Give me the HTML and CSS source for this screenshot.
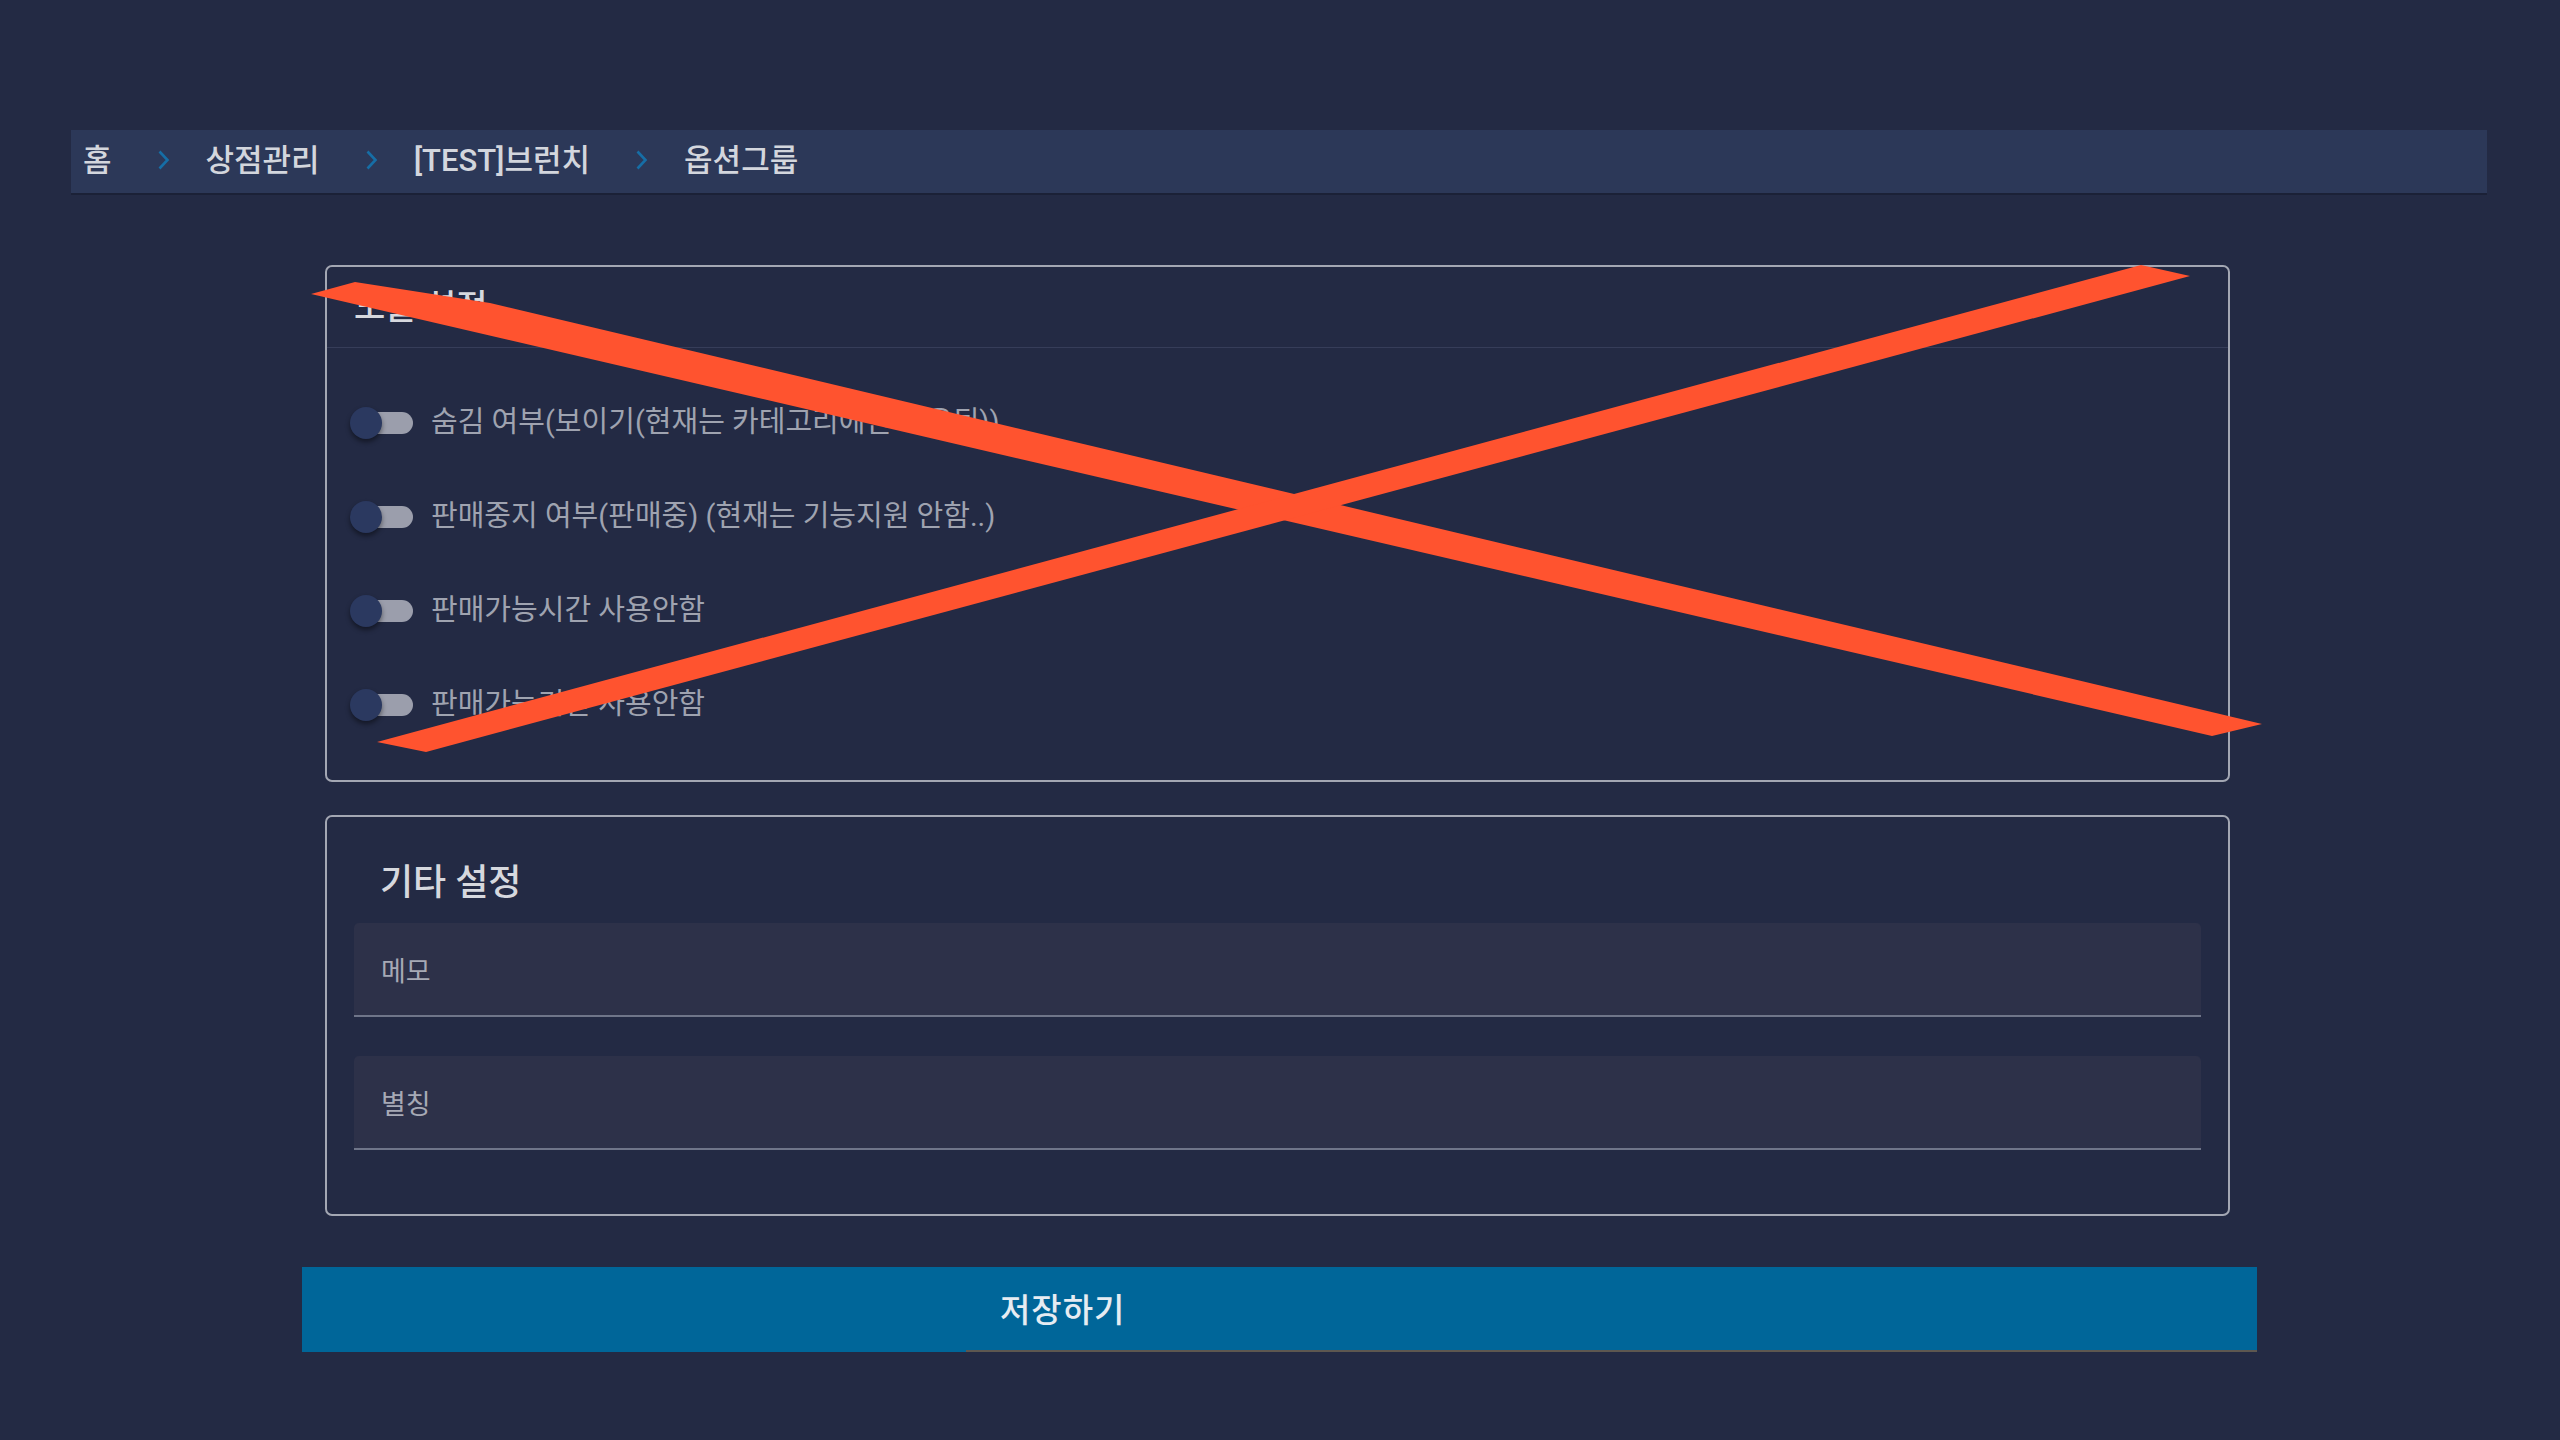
FILE: index.html
```html
<!DOCTYPE html>
<html lang="ko">
<head>
<meta charset="utf-8">
<title>옵션그룹</title>
<link rel="stylesheet" href="styles.css">
</head>
<body>
<div class="page">
  <nav class="crumbs">
    <span class="crumb">홈</span>
    <span class="sep"><svg viewBox="0 0 13 20" width="13" height="20"><path d="M2.5 1.5 L10.5 10 L2.5 18.5" fill="none" stroke="#166ea6" stroke-width="2.6"/></svg></span>
    <span class="crumb">상점관리</span>
    <span class="sep"><svg viewBox="0 0 13 20" width="13" height="20"><path d="M2.5 1.5 L10.5 10 L2.5 18.5" fill="none" stroke="#166ea6" stroke-width="2.6"/></svg></span>
    <span class="crumb">[TEST]브런치</span>
    <span class="sep"><svg viewBox="0 0 13 20" width="13" height="20"><path d="M2.5 1.5 L10.5 10 L2.5 18.5" fill="none" stroke="#166ea6" stroke-width="2.6"/></svg></span>
    <span class="crumb">옵션그룹</span>
  </nav>

  <main class="content">
    <section class="card card-toggles">
      <header class="card-head">노출 설정</header>
      <div class="toggle-list">
        <div class="toggle-row">
          <span class="switch"><span class="track"></span><span class="thumb"></span></span>
          <span class="toggle-label">숨김 여부(보이기(현재는 카테고리에만 적용됨))</span>
        </div>
        <div class="toggle-row">
          <span class="switch"><span class="track"></span><span class="thumb"></span></span>
          <span class="toggle-label">판매중지 여부(판매중) (현재는 기능지원 안함..)</span>
        </div>
        <div class="toggle-row">
          <span class="switch"><span class="track"></span><span class="thumb"></span></span>
          <span class="toggle-label">판매가능시간 사용안함</span>
        </div>
        <div class="toggle-row">
          <span class="switch"><span class="track"></span><span class="thumb"></span></span>
          <span class="toggle-label">판매가능기간 사용안함</span>
        </div>
      </div>
    </section>

    <section class="card card-etc">
      <h2 class="card-title">기타 설정</h2>
      <label class="field"><span class="field-label">메모</span></label>
      <label class="field field-second"><span class="field-label">별칭</span></label>
    </section>

    <button class="save-btn" type="button">저장하기</button>
  </main>
</div>

<svg class="mark" viewBox="0 0 2560 1440" width="2560" height="1440">
  <polygon points="311,294 355,282 490,303 2262,724 2212,736" fill="#ff532f"/>
  <polygon points="377,742 2141,265 2190,276 426,752" fill="#ff532f"/>
</svg>
</body>
</html>
```

FILE: styles.css
```css
html, body {
  margin: 0;
  padding: 0;
  background: #232a44;
  overflow: hidden;
}

body {
  width: 2560px;
  height: 1440px;
  position: relative;
  font-family: Roboto, "Noto Sans CJK KR", sans-serif;
  color: #d4d7de;
}

.page {
  padding-top: 130px;
}

.crumbs {
  display: flex;
  align-items: center;
  height: 63px;
  margin: 0 73px 0 71px;
  padding-left: 12px;
  background: #2c3858;
  box-shadow: 0 2px 0 #1b2137;
  font-size: 31px;
  font-weight: 500;
  color: #d3d6dd;
}

.crumb {
  line-height: 1;
  padding-bottom: 3px;
}

.sep {
  display: flex;
  align-items: center;
  margin: 0 36px 0 45px;
  padding-bottom: 3px;
}

.content {
  display: flex;
  flex-direction: column;
}

.card {
  margin-left: 325px;
  width: 1905px;
  box-sizing: border-box;
  border: 2px solid #a3a7b3;
  border-radius: 7px;
  background: #232a44;
}

.card-toggles {
  margin-top: 72px;
}

.card-head {
  height: 81px;
  display: flex;
  align-items: center;
  padding-left: 27px;
  padding-bottom: 6px;
  box-sizing: border-box;
  border-bottom: 1px solid #363d59;
  font-size: 34px;
  font-weight: 500;
  color: #d6d8de;
}

.toggle-list {
  display: flex;
  flex-direction: column;
  padding: 28px 0 28px;
}

.toggle-row {
  height: 94px;
  display: flex;
  align-items: center;
  padding-left: 23px;
}

.switch {
  position: relative;
  width: 63px;
  height: 32px;
  margin-right: 18px;
  flex: none;
}

.track {
  position: absolute;
  left: 3px;
  top: 5px;
  width: 60px;
  height: 22px;
  border-radius: 11px;
  background: #9b9eac;
}

.thumb {
  position: absolute;
  left: 0;
  top: 0;
  width: 32px;
  height: 32px;
  border-radius: 50%;
  background: #2b3960;
  box-shadow: 0 3px 5px rgba(0, 0, 0, 0.45);
}

.toggle-label {
  font-size: 29px;
  color: #9fa3b0;
  line-height: 1;
  padding-bottom: 2px;
}

.card-etc {
  margin-top: 33px;
  padding: 41px 27px 64px 27px;
}

.card-title {
  margin: 0 0 15px;
  padding-left: 26px;
  height: 50px;
  line-height: 50px;
  font-size: 36px;
  font-weight: 500;
  color: #d6d8de;
}

.field {
  display: flex;
  align-items: center;
  height: 94px;
  box-sizing: border-box;
  padding-left: 27px;
  background: #2d3149;
  border-bottom: 2px solid #6f7589;
  border-radius: 5px 5px 0 0;
}

.field-second {
  margin-top: 39px;
}

.field-label {
  font-size: 27px;
  color: #a6a9b5;
}

.save-btn {
  margin: 51px 0 0 302px;
  width: 1955px;
  height: 85px;
  border: 0;
  border-radius: 0;
  padding: 0 0 4px 698px;
  display: flex;
  align-items: center;
  justify-content: flex-start;
  background-color: #006699;
  background-image: linear-gradient(#5d5750, #5d5750);
  background-size: 1291px 2px;
  background-position: right bottom;
  background-repeat: no-repeat;
  font-family: Roboto, "Noto Sans CJK KR", sans-serif;
  font-size: 33px;
  font-weight: 500;
  letter-spacing: 1px;
  color: #e6ecf2;
}

.mark {
  position: absolute;
  left: 0;
  top: 0;
  pointer-events: none;
}
```
